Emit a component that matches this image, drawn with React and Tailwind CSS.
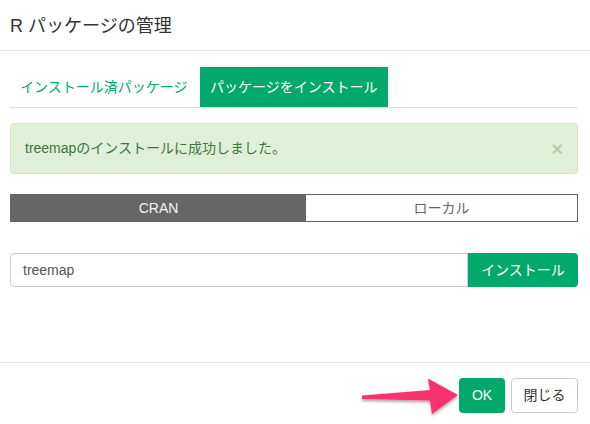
const FONT = { fontFamily: '"Liberation Sans", "Noto Sans CJK JP", sans-serif' };

function Arrow() {
  return (
    <svg
      className="absolute left-[350px] top-[370px]"
      width="120"
      height="54"
      viewBox="350 370 120 54"
    >
      <defs>
        <filter id="sh" x="-20%" y="-40%" width="140%" height="180%">
          <feDropShadow dx="0" dy="2" stdDeviation="1.5" floodColor="#000" floodOpacity="0.35" />
        </filter>
      </defs>
      <polygon
        filter="url(#sh)"
        fill="#f7336e"
        points="362,395.5 430,390 428,378.5 458,395 432,414 430,400.5 362,399"
      />
    </svg>
  );
}

export default function App() {
  return (
    <div className="relative w-[590px] h-[424px] bg-white text-[#333]" style={FONT}>
      {/* Header */}
      <div className="h-[51px] border-b border-[#e5e5e5] pl-[10px] flex items-center">
        <h1 className="text-[18px] leading-none text-[#333] pt-[2px]">R パッケージの管理</h1>
      </div>

      {/* Body */}
      <div className="h-[311px] pl-[10px] pr-[12px] pt-[16px]">
        {/* Tabs */}
        <div className="flex h-[41px] border-b border-[#ddd]">
          <div className="w-[188px] mr-[2px] px-[10px] flex items-center text-[14px] text-[#03a86c]">
            インストール済パッケージ
          </div>
          <div className="w-[188px] px-[10px] flex items-center text-[14px] text-white bg-[#03a86c]">
            パッケージをインストール
          </div>
        </div>

        {/* Alert */}
        <div className="mt-[15px] h-[51px] rounded-[4px] border border-[#d6e9c6] bg-[#dff0d8] pl-[14px] pr-[14px] flex items-center justify-between">
          <span className="text-[14px] text-[#3c763d]">treemapのインストールに成功しました。</span>
          <span className="text-[20px] font-bold text-[#b5d2ab] leading-none">×</span>
        </div>

        {/* Source toggle */}
        <div className="mt-[20px] h-[28px] flex border border-[#666]">
          <div className="w-[295px] bg-[#666] text-[#f2f2f2] text-[14px] flex items-center justify-center">
            CRAN
          </div>
          <div className="flex-1 text-[#666] text-[14px] flex items-center justify-center">
            ローカル
          </div>
        </div>

        {/* Install row */}
        <div className="mt-[31px] h-[34px] flex">
          <div className="w-[458px] border border-[#ccc] rounded-l-[4px] pl-[12px] flex items-center text-[14px] text-[#555]">
            treemap
          </div>
          <button className="flex-1 bg-[#03a86c] text-white text-[14px] rounded-r-[4px]">
            インストール
          </button>
        </div>
      </div>

      {/* Footer */}
      <div className="border-t border-[#e5e5e5] pt-[15px] pr-[12px] flex justify-end gap-[6px]">
        <button className="w-[46px] h-[35px] rounded-[4px] bg-[#03a86c] text-white text-[14px]">OK</button>
        <button className="w-[67px] h-[35px] rounded-[4px] border border-[#ccc] bg-white text-[#333] text-[14px]">
          閉じる
        </button>
      </div>

      <Arrow />
    </div>
  );
}
